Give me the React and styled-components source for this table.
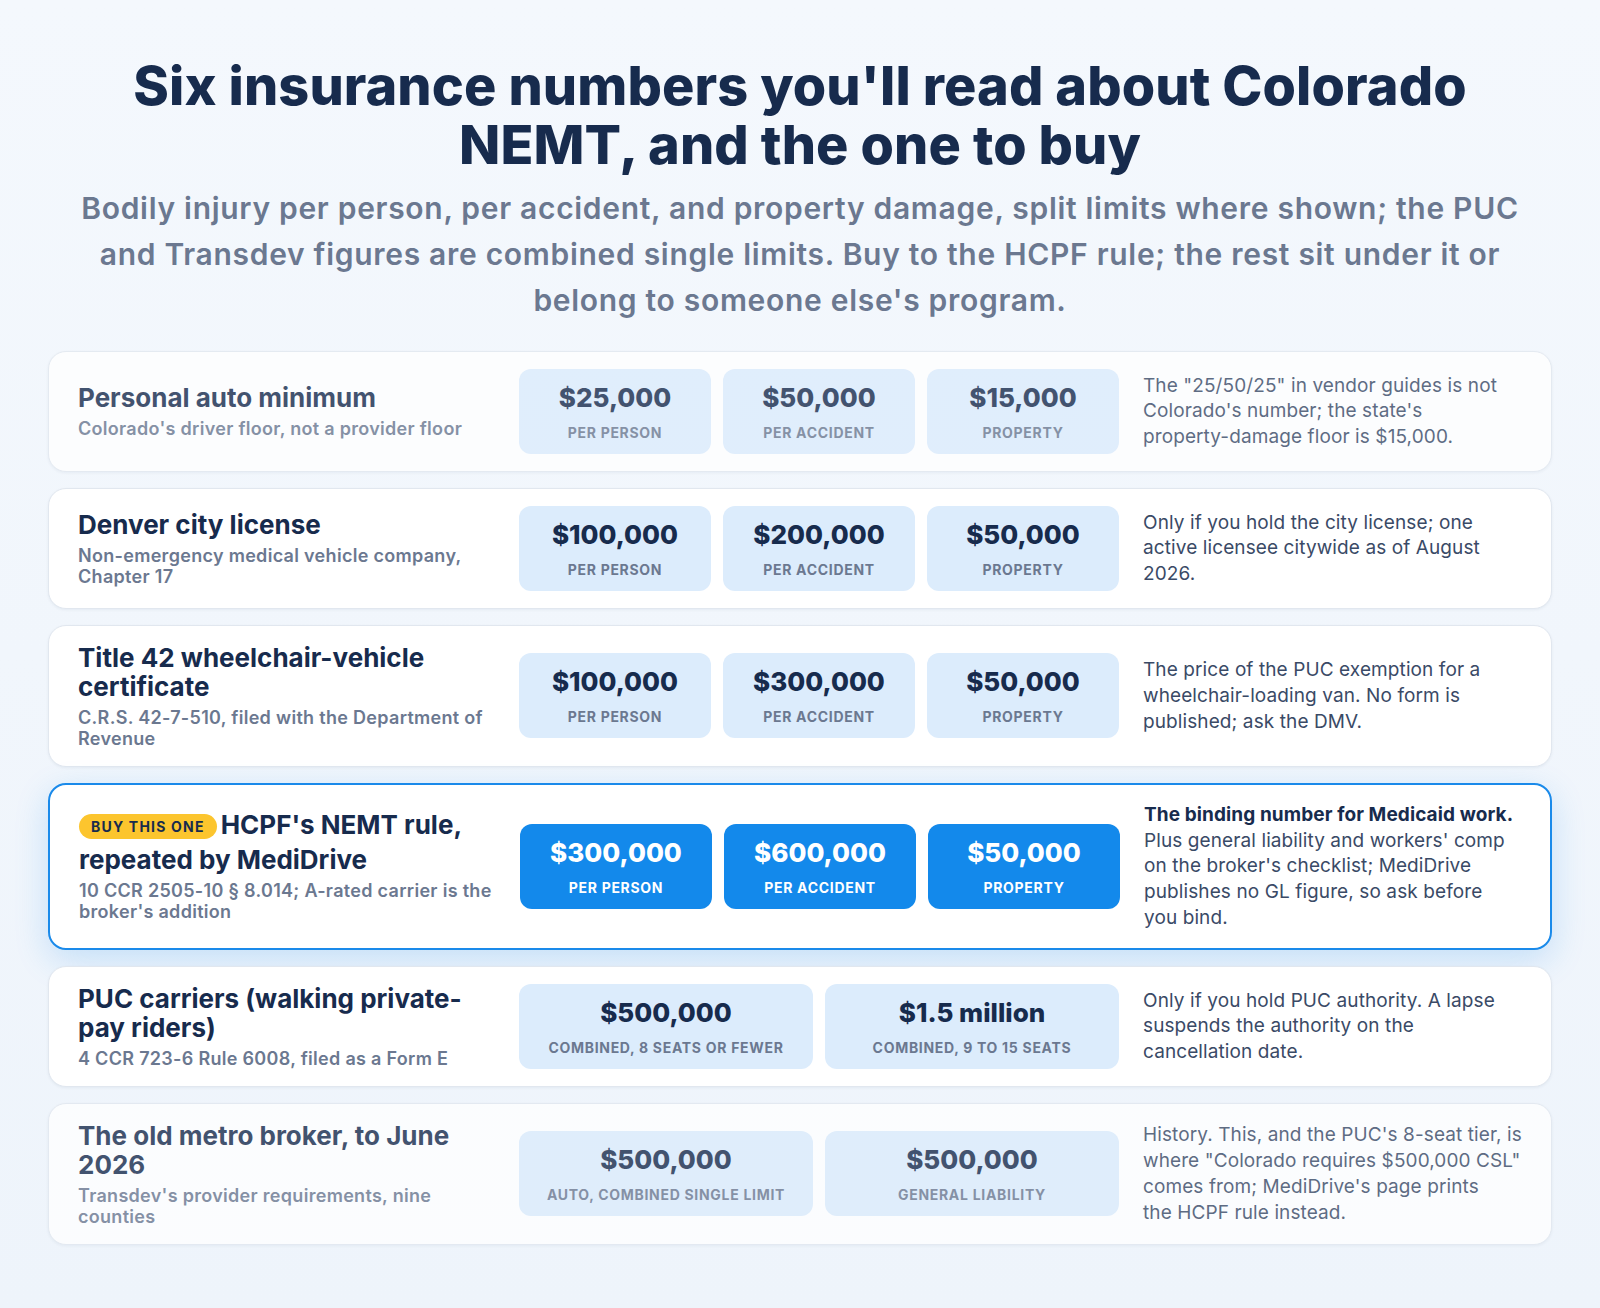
import React from "react";
import styled, { createGlobalStyle } from "styled-components";

const GlobalStyle = createGlobalStyle`
  html, body {
    margin: 0;
    padding: 0;
  }
  body {
    background: linear-gradient(180deg, #f4f8fd 0%, #eef4fb 100%);
    font-family: Inter, "Noto Sans", sans-serif;
    color: #172b4d;
  }
`;

const Page = styled.div`
  min-height: 1308px;
  box-sizing: border-box;
  padding: 56px 48px 48px;
`;

const Title = styled.h1`
  margin: 0;
  text-align: center;
  font-size: 54px;
  line-height: 1.1;
  font-weight: 800;
  letter-spacing: 0.1px;
  color: #172b4d;
`;

const Lead = styled.p`
  margin: 10px auto 28px;
  max-width: 1460px;
  text-align: center;
  font-size: 30px;
  line-height: 46px;
  font-weight: 600;
  letter-spacing: 0.7px;
  color: #6b7890;
`;

const List = styled.div`
  display: flex;
  flex-direction: column;
  gap: 16px;
`;

const Card = styled.div`
  display: grid;
  grid-template-columns: 417px 600px 1fr;
  gap: 24px;
  align-items: center;
  padding: 17px 27px 17px 29px;
  border-radius: 18px;
  background: #ffffff;
  border: ${(p) => (p.$pick ? "2px solid #1a8aea" : "1px solid #e1e7ef")};
  box-shadow: ${(p) =>
    p.$pick
      ? "0 10px 34px rgba(19, 137, 235, 0.2)"
      : "0 1px 3px rgba(20, 45, 90, 0.06)"};
  opacity: ${(p) => (p.$faded ? 0.8 : 1)};
`;

const Label = styled.div`
  display: flex;
  flex-direction: column;
  gap: 6px;
`;

const Name = styled.div`
  font-size: 26px;
  line-height: 29px;
  font-weight: 700;
  color: #172b4d;
`;

const Badge = styled.span`
  display: inline-block;
  vertical-align: 2px;
  margin: 0 4px 6px 0;
  padding: 3px 12px;
  border-radius: 999px;
  background: #fcc52e;
  color: #172b4d;
  font-size: 14px;
  line-height: 19px;
  font-weight: 700;
  letter-spacing: 1.2px;
  text-transform: uppercase;
`;

const Source = styled.div`
  font-size: 18px;
  line-height: 21px;
  font-weight: 600;
  letter-spacing: 0.3px;
  color: #6b7890;
`;

const Figures = styled.div`
  display: grid;
  grid-template-columns: repeat(${(p) => p.$count}, 1fr);
  gap: 12px;
`;

const Figure = styled.div`
  display: flex;
  flex-direction: column;
  align-items: center;
  gap: 11px;
  padding: 14px 10px 12px;
  border-radius: 12px;
  background: ${(p) => (p.$pick ? "#1389eb" : "#dcecfc")};
`;

const Amount = styled.div`
  font-size: 26px;
  line-height: 30px;
  font-weight: 800;
  color: ${(p) => (p.$pick ? "#ffffff" : "#172b4d")};
`;

const Caption = styled.div`
  font-size: 14px;
  line-height: 18px;
  font-weight: 700;
  letter-spacing: 0.7px;
  text-transform: uppercase;
  color: ${(p) => (p.$pick ? "#ffffff" : "#6b7890")};
`;

const Note = styled.p`
  margin: 0;
  font-size: 19px;
  line-height: 25.8px;
  letter-spacing: 0.1px;
  color: #3a4a66;

  strong {
    display: block;
    color: #172b4d;
    font-weight: 700;
  }
`;

const Keep = styled.span`
  white-space: nowrap;
`;

const rows = [
  {
    name: "Personal auto minimum",
    source: "Colorado's driver floor, not a provider floor",
    faded: true,
    figures: [
      ["$25,000", "Per person"],
      ["$50,000", "Per accident"],
      ["$15,000", "Property"],
    ],
    note: (
      <>
        The "25/50/25" in vendor guides is not Colorado's number; the state's <Keep>property-damage</Keep> floor
        is $15,000.
      </>
    ),
  },
  {
    name: "Denver city license",
    source: "Non-emergency medical vehicle company, Chapter 17",
    figures: [
      ["$100,000", "Per person"],
      ["$200,000", "Per accident"],
      ["$50,000", "Property"],
    ],
    note: <>Only if you hold the city license; one active licensee citywide as of August 2026.</>,
  },
  {
    name: "Title 42 wheelchair-vehicle certificate",
    source: "C.R.S. 42-7-510, filed with the Department of Revenue",
    figures: [
      ["$100,000", "Per person"],
      ["$300,000", "Per accident"],
      ["$50,000", "Property"],
    ],
    note: <>The price of the PUC exemption for a wheelchair-loading van. No form is published; ask the DMV.</>,
  },
  {
    name: "HCPF's NEMT rule, repeated by MediDrive",
    source: "10 CCR 2505-10 § 8.014; A-rated carrier is the broker's addition",
    pick: true,
    figures: [
      ["$300,000", "Per person"],
      ["$600,000", "Per accident"],
      ["$50,000", "Property"],
    ],
    note: (
      <>
        <strong>The binding number for Medicaid work.</strong> Plus general liability and workers' comp on the
        broker's checklist; MediDrive publishes no GL figure, so ask before <Keep>you bind.</Keep>
      </>
    ),
  },
  {
    name: "PUC carriers (walking private-pay riders)",
    source: "4 CCR 723-6 Rule 6008, filed as a Form E",
    figures: [
      ["$500,000", "Combined, 8 seats or fewer"],
      ["$1.5 million", "Combined, 9 to 15 seats"],
    ],
    note: <>Only if you hold PUC authority. A lapse suspends the authority on the cancellation date.</>,
  },
  {
    name: "The old metro broker, to June 2026",
    source: "Transdev's provider requirements, nine counties",
    faded: true,
    figures: [
      ["$500,000", "Auto, combined single limit"],
      ["$500,000", "General liability"],
    ],
    note: (
      <>
        History. This, and the PUC's 8-seat tier, is where "Colorado requires $500,000 CSL" comes from;
        MediDrive's page prints <Keep>the HCPF</Keep> rule instead.
      </>
    ),
  },
];

const App = () => {
  return (
    <Page>
      <GlobalStyle />
      <Title>
        Six insurance numbers you'll read about Colorado
        <br />
        NEMT, and the one to buy
      </Title>
      <Lead>
        Bodily injury per person, per accident, and property damage, split limits where shown; the PUC and
        Transdev figures are combined single limits. Buy to the HCPF rule; the rest sit under it or belong to
        someone else's program.
      </Lead>
      <List>
        {rows.map((row) => (
          <Card key={row.name} $pick={row.pick} $faded={row.faded}>
            <Label>
              <Name>
                {row.pick && <Badge>Buy this one</Badge>}
                {row.name}
              </Name>
              <Source>{row.source}</Source>
            </Label>
            <Figures $count={row.figures.length}>
              {row.figures.map(([amount, caption]) => (
                <Figure key={caption} $pick={row.pick}>
                  <Amount $pick={row.pick}>{amount}</Amount>
                  <Caption $pick={row.pick}>{caption}</Caption>
                </Figure>
              ))}
            </Figures>
            <Note>{row.note}</Note>
          </Card>
        ))}
      </List>
    </Page>
  );
};

export default App;
